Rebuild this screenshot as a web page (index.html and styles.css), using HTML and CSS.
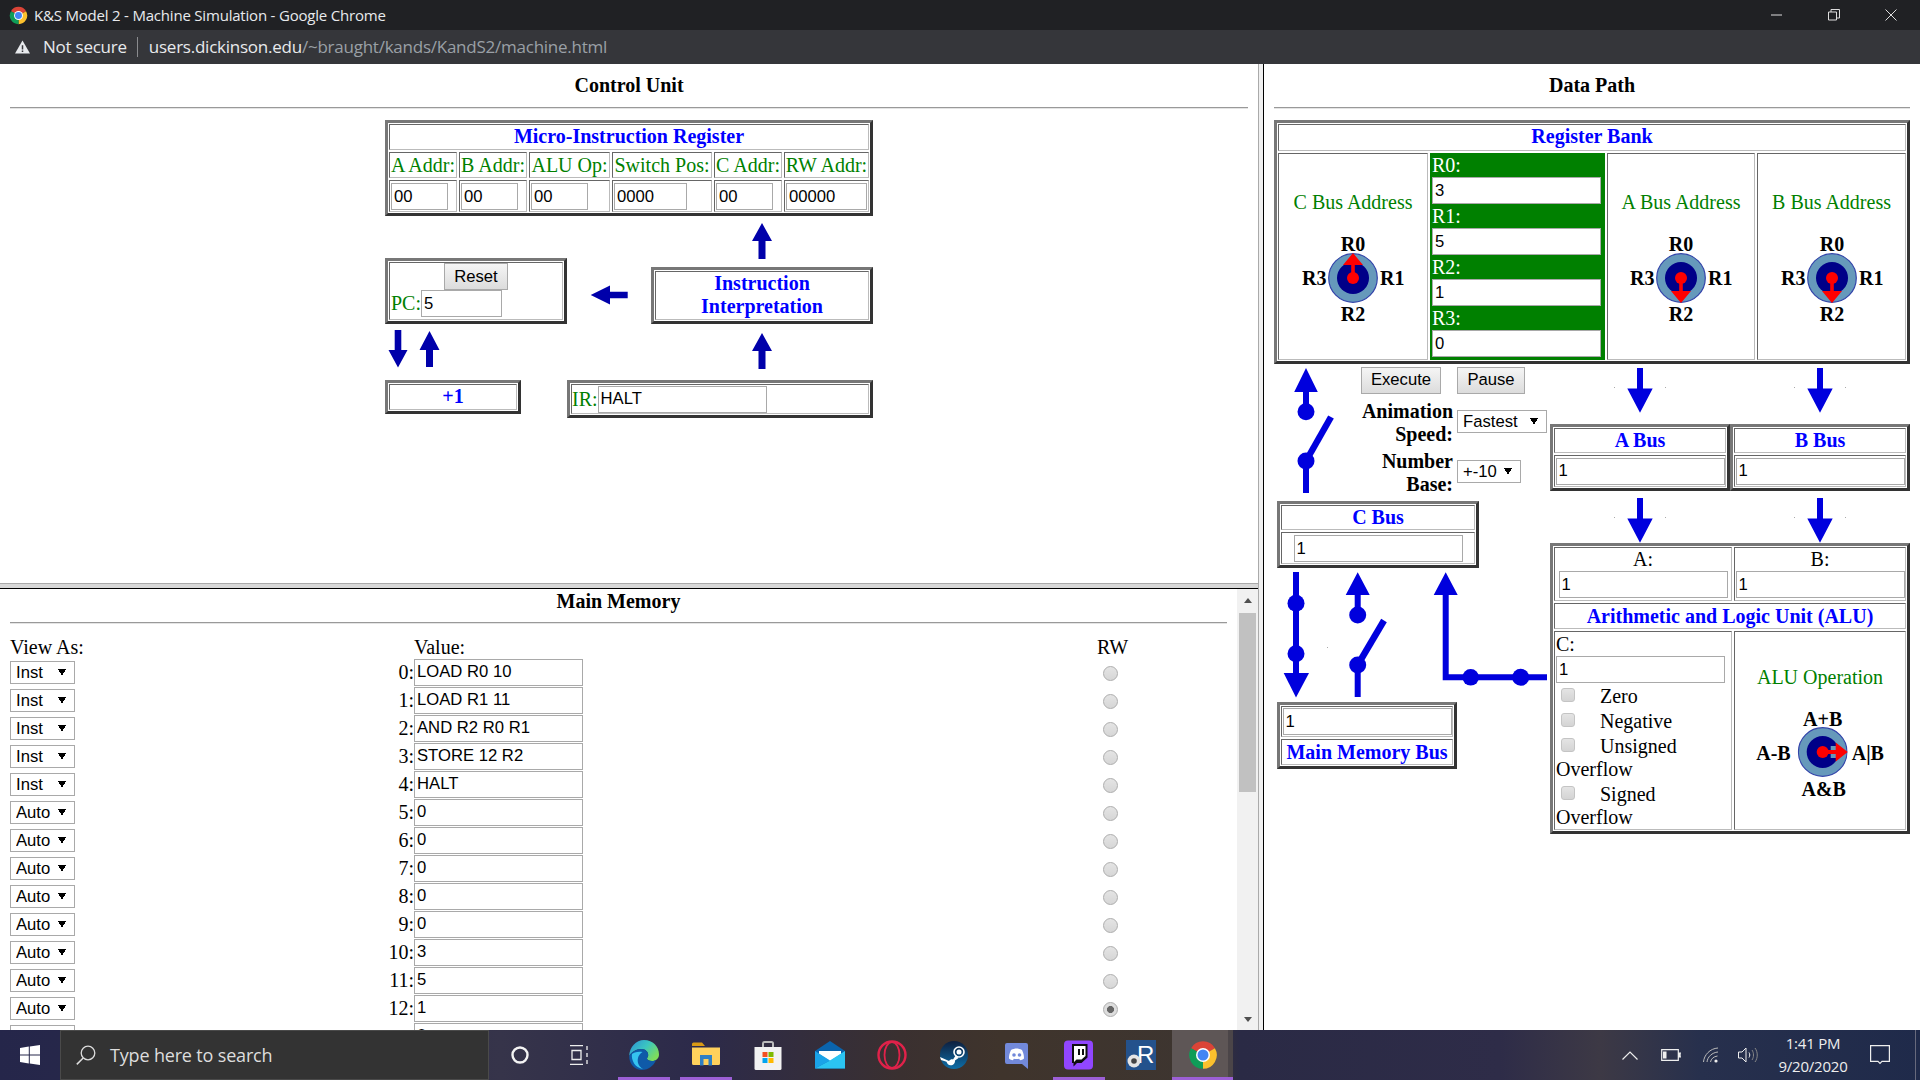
FILE: index.html
```html
<!DOCTYPE html>
<html lang="en">
<head>
<meta charset="utf-8">
<title>K&amp;S Model 2 - Machine Simulation</title>
<link rel="stylesheet" href="styles.css">
</head>
<body>
<svg class="defs" width="0" height="0" aria-hidden="true">
  <symbol id="chrome" viewBox="0 0 24 24">
    <path fill="#db4437" d="M12 12 21.53 6.5A11 11 0 0 0 2.47 6.5Z"/>
    <path fill="#fbc02d" d="M12 12 21.53 6.5A11 11 0 0 1 12 23Z"/>
    <path fill="#0f9d58" d="M12 12 12 23A11 11 0 0 1 2.47 6.5Z"/>
    <circle cx="12" cy="12" r="5.6" fill="#fff"/>
    <circle cx="12" cy="12" r="4.4" fill="#4285f4"/>
  </symbol>
  <symbol id="dialface" viewBox="0 0 50 50">
    <circle cx="25" cy="25" r="24.3" fill="#6699bb" stroke="#3344aa" stroke-width="1.2"/>
    <circle cx="25" cy="25" r="16" fill="#000088"/>
  </symbol>
</svg>

<header class="titlebar">
  <svg class="title-logo"><use href="#chrome"/></svg>
  <span class="title-text">K&amp;S Model 2 - Machine Simulation - Google Chrome</span>
  <div class="win-controls">
    <svg class="win-btn" viewBox="0 0 12 12"><path d="M0 6h11" stroke="#ddd" fill="none"/></svg>
    <svg class="win-btn" viewBox="0 0 12 12"><path d="M.5 3h8v8h-8zM3 3V.5h8.5V9H8.5" stroke="#ddd" fill="none"/></svg>
    <svg class="win-btn" viewBox="0 0 12 12"><path d="M.5.5l11 11M11.5.5l-11 11" stroke="#ddd" fill="none"/></svg>
  </div>
</header>
<div class="addrbar">
  <svg class="warn" viewBox="0 0 16 14"><path fill="#e8eaed" d="M8 0 16 14H0Z"/><path fill="#35363a" d="M7.2 5h1.6v4.6H7.2zM7.2 10.6h1.6v1.6H7.2z"/></svg>
  <span class="not-secure">Not secure</span>
  <span class="addr-sep"></span>
  <span class="url"><span class="url-host">users.dickinson.edu</span>/~braught/kands/KandS2/machine.html</span>
</div>

<main class="workspace">
  <div class="left-col">
    <section class="frame control">
      <h1 class="frame-title">Control Unit</h1>
      <hr class="rule">
      <svg class="wires" viewBox="0 64 1258 519" fill="#0000aa">
        <path d="M762 223l10 18h-6.5v18h-7v-18h-6.500z"/>
        <path d="M762 333l10 18h-6.500v18h-7v-18h-6.500z"/>
        <path d="M398 367.500l-9.500-17.500h6.200v-20h6.600v20h6.200z"/>
        <path d="M429.500 331l10 19h-6.500v17h-7v-17h-6.500z"/>
        <path d="M590.700 295l19.300-9.500v6.200h17.700v6.600h-17.700v6.200z"/>
      </svg>

      <div class="box mir">
        <div class="cell head span6">Micro-Instruction Register</div>
        <div class="cell lbl">A Addr:</div>
        <div class="cell lbl">B Addr:</div>
        <div class="cell lbl">ALU Op:</div>
        <div class="cell lbl">Switch Pos:</div>
        <div class="cell lbl">C Addr:</div>
        <div class="cell lbl">RW Addr:</div>
        <div class="cell mir-in"><input class="field w57" value="00"></div>
        <div class="cell mir-in"><input class="field w57" value="00"></div>
        <div class="cell mir-in"><input class="field w57" value="00"></div>
        <div class="cell mir-in"><input class="field w73" value="0000"></div>
        <div class="cell mir-in"><input class="field w57" value="00"></div>
        <div class="cell mir-in"><input class="field w81" value="00000"></div>
      </div>

      <div class="box pc">
        <div class="cell pc-cell">
          <button class="btn reset">Reset</button>
          <div class="pc-row"><span class="green">PC:</span><input class="field w81" value="5"></div>
        </div>
      </div>
      <div class="box interp"><div class="cell head">Instruction<br>Interpretation</div></div>
      <div class="box plus"><div class="cell head">+1</div></div>
      <div class="box ir"><div class="cell ir-cell"><span class="green">IR:</span><input class="field" value="HALT"></div></div>
    </section>
    <div class="hsplit"></div>
    <section class="memory">
      <div class="mem-body">
        <h2 class="frame-title mem-title">Main Memory</h2>
        <hr class="rule mem-rule">
        <div class="mem-row mem-head"><span class="nowrap">View As:</span><span></span><span>Value:</span><span class="rw-h">RW</span></div>
        <div class="mem-row"><select class="sel"><option>Inst</option></select><span class="addr">0:</span><input class="field" value="LOAD R0 10"><input class="radio" type="radio" name="rw"></div>
        <div class="mem-row"><select class="sel"><option>Inst</option></select><span class="addr">1:</span><input class="field" value="LOAD R1 11"><input class="radio" type="radio" name="rw"></div>
        <div class="mem-row"><select class="sel"><option>Inst</option></select><span class="addr">2:</span><input class="field" value="AND R2 R0 R1"><input class="radio" type="radio" name="rw"></div>
        <div class="mem-row"><select class="sel"><option>Inst</option></select><span class="addr">3:</span><input class="field" value="STORE 12 R2"><input class="radio" type="radio" name="rw"></div>
        <div class="mem-row"><select class="sel"><option>Inst</option></select><span class="addr">4:</span><input class="field" value="HALT"><input class="radio" type="radio" name="rw"></div>
        <div class="mem-row"><select class="sel"><option>Auto</option></select><span class="addr">5:</span><input class="field" value="0"><input class="radio" type="radio" name="rw"></div>
        <div class="mem-row"><select class="sel"><option>Auto</option></select><span class="addr">6:</span><input class="field" value="0"><input class="radio" type="radio" name="rw"></div>
        <div class="mem-row"><select class="sel"><option>Auto</option></select><span class="addr">7:</span><input class="field" value="0"><input class="radio" type="radio" name="rw"></div>
        <div class="mem-row"><select class="sel"><option>Auto</option></select><span class="addr">8:</span><input class="field" value="0"><input class="radio" type="radio" name="rw"></div>
        <div class="mem-row"><select class="sel"><option>Auto</option></select><span class="addr">9:</span><input class="field" value="0"><input class="radio" type="radio" name="rw"></div>
        <div class="mem-row"><select class="sel"><option>Auto</option></select><span class="addr">10:</span><input class="field" value="3"><input class="radio" type="radio" name="rw"></div>
        <div class="mem-row"><select class="sel"><option>Auto</option></select><span class="addr">11:</span><input class="field" value="5"><input class="radio" type="radio" name="rw"></div>
        <div class="mem-row"><select class="sel"><option>Auto</option></select><span class="addr">12:</span><input class="field" value="1"><input class="radio" type="radio" name="rw" checked></div>
        <div class="mem-row"><select class="sel"><option>Auto</option></select><span></span><input class="field" value="0"><input class="radio" type="radio" name="rw"></div>
      </div>
      <div class="scrollbar">
        <div class="sb-btn"><span class="tri-up"></span></div>
        <div class="sb-track"><div class="sb-thumb"></div></div>
        <div class="sb-btn"><span class="tri-down"></span></div>
      </div>
    </section>
  </div>
  <div class="vsplit"></div>

  <section class="frame datapath">
    <h1 class="frame-title">Data Path</h1>
    <hr class="rule">
    <svg class="wires" viewBox="1264 64 656 966" fill="#0000dd" stroke-linecap="butt">
      <!-- C bus feed from register bank -->
      <path d="M1306 368l11.800 24H1309v12h-6v-12h-8.800z"/>
      <circle cx="1306" cy="411.700" r="8.500"/>
      <path d="M1306 461 1331 417" stroke="#0000dd" stroke-width="6.500" fill="none"/>
      <circle cx="1306" cy="461" r="8.500"/>
      <rect x="1303" y="461" width="6" height="32"/>
      <!-- register bank to A and B bus -->
      <path d="M1637 368h6v20.500h9.700L1640 412.700l-12.700-24.200h9.700z"/>
      <path d="M1817 368h6v20.500h9.700L1820 412.700l-12.700-24.200h9.700z"/>
      <path d="M1637 498h6v20.500h9.700L1640 542.700l-12.700-24.200h9.700z"/>
      <path d="M1817 498h6v20.500h9.700L1820 542.700l-12.700-24.200h9.700z"/>
      <g fill="#aaa">
        <rect x="1614" y="387" width="1" height="1"/><rect x="1665" y="387" width="1" height="1"/>
        <rect x="1794" y="387" width="1" height="1"/><rect x="1845" y="387" width="1" height="1"/>
        <rect x="1614" y="517" width="1" height="1"/><rect x="1665" y="517" width="1" height="1"/>
        <rect x="1794" y="517" width="1" height="1"/><rect x="1845" y="517" width="1" height="1"/>
        <rect x="1327" y="647" width="1" height="1"/>
      </g>
      <!-- C bus to memory bus -->
      <rect x="1293" y="572" width="6" height="105"/>
      <circle cx="1296" cy="603.300" r="8.500"/>
      <circle cx="1296" cy="653.700" r="8.500"/>
      <path d="M1283.700 673h25.300L1296 697.500z"/>
      <!-- memory bus to C bus -->
      <path d="M1357.700 572.300l12 22.700h-9v15h-6v-15h-9z"/>
      <circle cx="1357.700" cy="615" r="8.500"/>
      <path d="M1357.700 665 1384 620.500" stroke="#0000dd" stroke-width="6.500" fill="none"/>
      <circle cx="1357.700" cy="665" r="8.500"/>
      <rect x="1354.700" y="665" width="6" height="32"/>
      <!-- ALU to C bus -->
      <path d="M1445.700 572.300l12 22.700h-9v79.300h98.300v6h-104.300V595h-9z"/>
      <circle cx="1470.700" cy="677.300" r="8.300"/>
      <circle cx="1520.700" cy="677.300" r="8.500"/>
    </svg>

    <div class="box bank">
      <div class="cell head span4">Register Bank</div>
      <div class="cell dial-cell">
        <span class="green">C Bus Address</span>
        <svg class="dial" viewBox="-70 -50 140 100">
          <use href="#dialface" x="-25" y="-25" width="50" height="50"/>
          <path class="needle" d="M-1.800 0V-13L-10 -13 0-25 10-13 1.800-13V0z"/><circle class="needle" r="6"/>
          <text class="dial-text" y="-27.500">R0</text><text class="dial-text" x="-38.700" y="6.500">R3</text><text class="dial-text" x="39.300" y="6.500">R1</text><text class="dial-text" y="42.500">R2</text>
        </svg>
      </div>
      <div class="cell regs">
        <label class="reg-lbl">R0:</label><input class="field" value="3">
        <label class="reg-lbl">R1:</label><input class="field" value="5">
        <label class="reg-lbl">R2:</label><input class="field" value="1">
        <label class="reg-lbl">R3:</label><input class="field" value="0">
      </div>
      <div class="cell dial-cell">
        <span class="green">A Bus Address</span>
        <svg class="dial" viewBox="-70 -50 140 100">
          <use href="#dialface" x="-25" y="-25" width="50" height="50"/>
          <path class="needle" d="M-1.800 0V13L-10 13 0 25 10 13 1.800 13V0z"/><circle class="needle" r="6"/>
          <text class="dial-text" y="-27.500">R0</text><text class="dial-text" x="-38.700" y="6.500">R3</text><text class="dial-text" x="39.300" y="6.500">R1</text><text class="dial-text" y="42.500">R2</text>
        </svg>
      </div>
      <div class="cell dial-cell">
        <span class="green">B Bus Address</span>
        <svg class="dial" viewBox="-70 -50 140 100">
          <use href="#dialface" x="-25" y="-25" width="50" height="50"/>
          <path class="needle" d="M-1.800 0V13L-10 13 0 25 10 13 1.800 13V0z"/><circle class="needle" r="6"/>
          <text class="dial-text" y="-27.500">R0</text><text class="dial-text" x="-38.700" y="6.500">R3</text><text class="dial-text" x="39.300" y="6.500">R1</text><text class="dial-text" y="42.500">R2</text>
        </svg>
      </div>
    </div>

    <div class="sim-buttons">
      <button class="btn exec">Execute</button>
      <button class="btn pause">Pause</button>
    </div>
    <div class="sim-opts">
      <div class="opt-lbl">Animation<br>Speed:</div>
      <select class="sel sel-fast"><option>Fastest</option></select>
      <div class="opt-lbl">Number<br>Base:</div>
      <select class="sel sel-base"><option>+-10</option></select>
    </div>

    <div class="box bus a-bus">
      <div class="cell head">A Bus</div>
      <div class="cell center"><input class="field" value="1"></div>
    </div>
    <div class="box bus b-bus">
      <div class="cell head">B Bus</div>
      <div class="cell center"><input class="field" value="1"></div>
    </div>
    <div class="box bus c-bus">
      <div class="cell head">C Bus</div>
      <div class="cell center"><input class="field" value="1"></div>
    </div>
    <div class="box bus mm-bus">
      <div class="cell center"><input class="field" value="1"></div>
      <div class="cell head">Main Memory Bus</div>
    </div>

    <div class="box alu">
      <div class="cell alu-in"><span>A:</span><input class="field" value="1"></div>
      <div class="cell alu-in"><span>B:</span><input class="field" value="1"></div>
      <div class="cell head span2">Arithmetic and Logic Unit (ALU)</div>
      <div class="cell alu-out">
        <div>C:</div>
        <input class="field" value="1">
        <div class="flag"><input class="check" type="checkbox">Zero</div>
        <div class="flag"><input class="check" type="checkbox">Negative</div>
        <div class="flag"><input class="check" type="checkbox">Unsigned Overflow</div>
        <div class="flag"><input class="check" type="checkbox">Signed Overflow</div>
      </div>
      <div class="cell dial-cell">
        <span class="green">ALU Operation</span>
        <svg class="dial" viewBox="-72.700 -50 140 100">
          <use href="#dialface" x="-25" y="-25" width="50" height="50"/>
          <rect x="8" y="-6" width="10" height="12" fill="#6699bb"/>
          <path class="needle" d="M0-2H13V-9.500L25 0 13 9.500V2H0z"/><circle class="needle" r="6"/>
          <text class="dial-text" y="-26.500">A+B</text><text class="dial-text end" x="-32" y="7.500">A-B</text><text class="dial-text start" x="29" y="7.500">A|B</text><text class="dial-text" x="1" y="43.500">A&amp;B</text>
        </svg>
      </div>
    </div>
  </section>
</main>

<footer class="taskbar">
  <div class="start">
    <svg class="ico20" viewBox="0 0 20 20"><path fill="#fff" d="M0 2.900 8.800 1.600V9.500H0zM9.800 1.400 20 0V9.500H9.800zM0 10.500H8.800V18.400L0 17.100zM9.800 10.500H20V20L9.800 18.600z"/></svg>
  </div>
  <div class="search">
    <svg class="ico20" viewBox="0 0 20 20"><circle cx="12" cy="8" r="6.800" fill="none" stroke="#ddd" stroke-width="1.300"/><path d="M7.200 13 .8 19.400" stroke="#ddd" stroke-width="1.500"/></svg>
    <span class="search-text">Type here to search</span>
  </div>
  <div class="tb tb-cortana"><svg class="ico20" viewBox="0 0 20 20"><circle cx="10" cy="10" r="7.500" fill="none" stroke="#f4f4f4" stroke-width="2.400"/></svg></div>
  <div class="tb tb-view"><svg class="ico20" viewBox="0 0 20 20"><path d="M1 .5h13M1 19.500h13M3 5.500h9v9H3zM18 1v4M18 8v4M18 15v4" fill="none" stroke="#eee" stroke-width="1.300"/></svg></div>
  <div class="tb open"><svg class="ico30" viewBox="0 0 30 30">
    <defs><linearGradient id="edgeg" x1="0" y1="0" x2="1" y2=".6"><stop offset="0" stop-color="#2b8fd8"/><stop offset=".55" stop-color="#3bc6c0"/><stop offset="1" stop-color="#7ddc5c"/></linearGradient></defs>
    <path fill="url(#edgeg)" d="M15 0C24 0 30 6.500 30 14.500c0 4-3 6.500-7 6.500-3 0-5-1-5-2.500 0-1 1.200-1.500 1.200-3.500 0-3-2.700-6-6.700-6C7 9 1.800 12.500 .2 16 .5 7 7 0 15 0z"/>
    <path fill="#0f5aa8" d="M.2 16c1.600-3.500 6.800-7 12.300-7 4 0 6.700 3 6.700 6 0 2-1.200 2.500-1.200 3.500 0 1.500 2 2.500 5 2.500 1.500 0 3-.4 4-1-2 5.500-7.500 10-14 10C6 30 0 24 .2 16z"/>
    <path fill="#35c3ef" d="M3 14c-1 6 3 14 11 15-4.500-2.500-6-7-5-11 .6-2.400 2-4.500 4.500-6-5-.8-9 .6-10.500 2z"/>
  </svg></div>
  <div class="tb open"><svg class="ico30" viewBox="0 0 30 30">
    <path fill="#d99a14" d="M1 4a1.500 1.500 0 0 1 1.500-1.500H11l3 3.500H1z"/>
    <path fill="#ffd15c" d="M1 7.500h28v16a1.500 1.500 0 0 1-1.500 1.500h-25A1.500 1.500 0 0 1 1 23.500z"/>
    <path fill="#2f7fc4" d="M9 15h12v10.500h-3.500V19h-5v6.500H9z"/>
  </svg></div>
  <div class="tb"><svg class="ico30" viewBox="0 0 30 30">
    <path fill="none" stroke="#bbb" stroke-width="2" d="M10 9V3.500a1.500 1.500 0 0 1 1.500-1.500h7A1.500 1.500 0 0 1 20 3.500V9"/>
    <path fill="#f2f2f2" d="M1.500 7h27v21.500a1.500 1.500 0 0 1-1.500 1.500H3a1.500 1.500 0 0 1-1.500-1.500z"/>
    <rect x="9.500" y="12" width="5" height="5" fill="#f25022"/><rect x="15.500" y="12" width="5" height="5" fill="#7fba00"/>
    <rect x="9.500" y="18" width="5" height="5" fill="#00a4ef"/><rect x="15.500" y="18" width="5" height="5" fill="#ffb900"/>
  </svg></div>
  <div class="tb"><svg class="ico30" viewBox="0 0 30 30">
    <path fill="#0a64ad" d="M0 11 15 1l15 10v17.500H0z"/>
    <path fill="#fff" d="M4 11h22v3L15 21 4 14z"/>
    <path fill="#1aa3e8" d="M0 11 15 20.500 0 28.500z"/>
    <path fill="#2bc4f2" d="M30 11 15 20.500l-15 8h30z"/>
  </svg></div>
  <div class="tb"><svg class="ico30" viewBox="0 0 30 30">
    <ellipse cx="15" cy="15" rx="13.500" ry="13.500" fill="none" stroke="#e0224a" stroke-width="2.400"/>
    <ellipse cx="15" cy="15" rx="7.500" ry="13" fill="none" stroke="#e0224a" stroke-width="1.800"/>
  </svg></div>
  <div class="tb"><svg class="ico30" viewBox="0 0 30 30">
    <defs><linearGradient id="steamg" x1="0" y1="0" x2="0" y2="1"><stop offset="0" stop-color="#0e1f3e"/><stop offset="1" stop-color="#0d6ea8"/></linearGradient></defs>
    <circle cx="15" cy="15" r="14" fill="url(#steamg)"/>
    <circle cx="20" cy="12" r="5" fill="none" stroke="#fff" stroke-width="1.600"/><circle cx="20" cy="12" r="2.500" fill="#fff"/>
    <path fill="#fff" d="M1 17l9 4c1-1.500 3-2 4-1.500l3-4.500 2.500 3-3.500 2.500c.2 3-2 5-4.500 4.800-2-.2-3.500-1.500-4-3.500L2 20z"/>
  </svg></div>
  <div class="tb"><svg class="ico30" viewBox="0 0 30 30">
    <path fill="#7289da" d="M5 3h19a2 2 0 0 1 2 2v24l-6-5H5a2 2 0 0 1-2-2V5a2 2 0 0 1 2-2z"/>
    <path fill="#fff" d="M9 10c4-2 7-2 11 0 1.500 3 2 5.500 2 8.500-1.300 1-2.500 1.500-4 1.700l-.8-1.400c-1.500.4-3.900.4-5.400 0l-.8 1.400c-1.500-.2-2.700-.7-4-1.700 0-3 .5-5.500 2-8.500z"/>
    <circle cx="12" cy="15" r="1.800" fill="#7289da"/><circle cx="17.500" cy="15" r="1.800" fill="#7289da"/>
  </svg></div>
  <div class="tb open"><svg class="ico30" viewBox="0 0 30 30">
    <rect width="29" height="29" y=".500" rx="4" fill="#9146ff"/>
    <path fill="#0e0e10" d="M8 4h15.500v13.500L17.500 23H13l-3.500 3.500V23H8z"/>
    <path fill="#fff" d="M10 6h11.500v10l-4 3.500h-5L10 22v-2.500zM14 9v6h2V9zM18 9v6h2V9z" fill-rule="evenodd"/>
  </svg></div>
  <div class="tb"><svg class="ico30" viewBox="0 0 30 30">
    <rect width="30" height="30" fill="#24528c"/>
    <text class="r-text" x="11" y="23">R</text>
    <circle cx="8" cy="21" r="6.500" fill="#e4e4e4"/><circle cx="8" cy="21" r="2.800" fill="#444"/>
  </svg></div>
  <div class="tb open active"><svg class="ico30 chrome-ico"><use href="#chrome"/></svg></div>
  <div class="tray">
    <svg class="tray-caret" viewBox="0 0 16 9"><path d="M.5 8.500 8 1l7.500 7.500" fill="none" stroke="#eee" stroke-width="1.200"/></svg>
    <svg class="tray-batt" viewBox="0 0 20 12"><path d="M.7.700h16.600v10.600H.7zM18.500 4H20v4h-1.500z" fill="none" stroke="#eee" stroke-width="1.200"/><rect x="2" y="2.500" width="3.500" height="7" fill="#eee"/></svg>
    <svg class="tray-wifi" viewBox="0 0 16 16"><path d="M.5 15C1 8 7 1.500 15 1M4 15c.5-5 5-9.500 11-10M7.500 15c.5-3 3-5.500 7-6" fill="none" stroke="#bbb"/><circle cx="13" cy="14" r="1.600" fill="#eee"/></svg>
    <svg class="tray-vol" viewBox="0 0 20 16"><path d="M.5 5h3.500L8 1v14l-4-4H.5z" fill="none" stroke="#eee"/><path d="M11 5.500c1 1.500 1 3.500 0 5" fill="none" stroke="#eee"/><path d="M14 3c2 3 2 7 0 10M17 1c3 4 3 10 0 14" fill="none" stroke="#888"/></svg>
    <div class="clock"><span>1:41 PM</span><span>9/20/2020</span></div>
    <svg class="tray-note" viewBox="0 0 20 20"><path d="M.6.600h18.800v15.800H12L10 18.500 8 16.400H.6z" fill="none" stroke="#eee" stroke-width="1.200"/></svg>
    <span class="show-desktop"></span>
  </div>
</footer>
</body>
</html>
```

FILE: styles.css
```css
* { box-sizing: border-box; }
html, body { margin: 0; height: 100%; }
body {
  width: 1920px; height: 1080px; overflow: hidden;
  display: flex; flex-direction: column;
  font: 20px/23px "Liberation Serif", "Times New Roman", serif;
  color: #000; background: #fff;
}
.defs { position: absolute; }
.nowrap { white-space: nowrap; }

/* Browser chrome */
.titlebar { height: 30px; background: #202124; display: flex; align-items: center; padding-left: 9px; flex: none; }
.title-logo { width: 19px; height: 19px; }
.title-text { margin-left: 6px; font: 15px/30px "Open Sans", sans-serif; color: #e8eaed; letter-spacing: -.2px; }
.win-controls { margin-left: auto; display: flex; gap: 45px; padding-right: 23px; }
.win-btn { width: 12px; height: 12px; }
.addrbar { height: 34px; background: #35363a; display: flex; align-items: center; padding-left: 15px; flex: none; font: 17px/34px "Open Sans", sans-serif; letter-spacing: -.24px; }
.warn { width: 15px; height: 14px; }
.not-secure { margin-left: 13px; color: #e8eaed; }
.addr-sep { width: 1px; height: 20px; background: #8a8b8e; margin: 0 11px 0 10px; }
.url { color: #9aa0a6; }
.url-host { color: #e8eaed; }

/* Page frames */
.workspace { flex: 1; display: flex; min-height: 0; }
.left-col { width: 1258px; display: flex; flex-direction: column; flex: none; }
.vsplit { width: 6px; flex: none; background: #f0f0f0; border-left: 1px solid #aaa; border-right: 1px solid #000; }
.hsplit { height: 6px; flex: none; background: #d8d8d8; border-top: 1px solid #aaa; border-bottom: 1px solid #000; }
.frame { position: relative; padding: 10px 10px 0; }
.control { height: 519px; flex: none; }
.datapath { flex: 1; }
.frame-title { margin: 0; font: bold 20px/23px "Liberation Serif", serif; text-align: center; }
.rule { margin: 10px 0 0; height: 2px; border: 0; border-top: 1px solid #999; border-bottom: 1px solid #e4e4e4; }
.wires { position: absolute; left: 0; top: 0; width: 100%; height: 100%; pointer-events: none; }

/* Boxes of the diagrams */
.box {
  position: absolute; display: grid; gap: 2px; padding: 1px; background: #fff;
  border: 3px solid; border-color: #777 #333 #333 #777;
}
.cell { border: 1px solid; border-color: #666 #bbb #bbb #666; min-width: 0; }
.head { color: #00f; font-weight: bold; text-align: center; display: flex; flex-direction: column; justify-content: center; }
.mir .head, .plus .head, .interp .head { padding-bottom: 1px; }
.bank .head { padding-bottom: 2px; }
.lbl { color: #008000; text-align: center; white-space: nowrap; line-height: 25px; }
.green { color: #008000; }
.center { display: flex; align-items: center; justify-content: center; }
.span6 { grid-column: span 6; }
.span4 { grid-column: span 4; }
.span2 { grid-column: span 2; }

/* Form controls */
.field {
  width: 169px; height: 27px; flex: none; margin: 0; padding: 0 2px;
  border: 1px solid #a9a9a9; background: #fff; color: #000;
  font: 16.67px "Liberation Sans", Arial, sans-serif; display: block;
}
.w57 { width: 57px; }
.w73 { width: 73px; }
.w81 { width: 81px; }
.btn {
  margin: 0; padding: 0 0 1px; height: 27px; display: block;
  font: 16.67px "Liberation Sans", Arial, sans-serif; color: #000;
  border: 1px solid #a9a9a9; background: linear-gradient(#f5f5f5, #dcdcdc);
}
.sel {
  appearance: none; -webkit-appearance: none; margin: 0; height: 23px; width: 65px; padding: 0 0 1px 5px;
  display: block; border: 1px solid #a9a9a9; border-radius: 0; color: #000;
  font: 16.67px "Liberation Sans", Arial, sans-serif;
  background-color: #fff;
  background-image: linear-gradient(to top right, transparent 50%, #000 50%), linear-gradient(to top left, transparent 50%, #000 50%);
  background-size: 4px 7px, 4px 7px;
  background-position: right 12px top 7px, right 8px top 7px;
  background-repeat: no-repeat;
}
.radio {
  appearance: none; -webkit-appearance: none; display: block;
  width: 15px; height: 15px; margin: 2px 0 0 520px; border-radius: 50%;
  border: 1px solid #adadad; background: linear-gradient(#e4e4e4, #d6d6d6);
}
.radio:checked { background: radial-gradient(circle, #666 0 3.200px, #ddd 3.800px); }
.check {
  appearance: none; -webkit-appearance: none; display: inline-block;
  width: 14px; height: 14px; margin: 0 25px 0 5px; vertical-align: 1px; border-radius: 3px;
  border: 1px solid #c4c4c4; background: linear-gradient(#e4e4e4, #d4d4d4);
}

/* Control unit nodes */
.mir { left: 385px; top: 56px; width: 488px; height: 96px; grid-template-columns: 68px 68px 81px 100px 68px 85px; grid-template-rows: 26px 26px 32px; }
.mir-in { display: flex; align-items: center; padding: 1px 0 0 1px; }
.pc { left: 385px; top: 194px; width: 182px; height: 66px; }
.pc-cell { display: flex; flex-direction: column; align-items: stretch; }
.reset { width: 64px; align-self: center; margin-top: 0; padding: 0; }
.pc-row { display: flex; align-items: center; height: 27px; padding-left: 1px; }
.interp { left: 651px; top: 203px; width: 222px; height: 57px; }
.plus { left: 385px; top: 316px; width: 136px; height: 34px; }
.ir { left: 567px; top: 316px; width: 306px; height: 38px; }
.ir-cell { display: flex; align-items: center; padding-left: 0; }

/* Memory */
.memory { flex: 1; display: flex; min-height: 0; overflow: hidden; }
.mem-body { flex: 1; padding: 1px 10px 0; overflow: hidden; min-width: 0; }
.mem-rule { margin-top: 9px; }
.mem-row { display: grid; grid-template-columns: 65px 339px 169px 1fr; align-items: center; height: 27px; margin-bottom: 1px; }
.mem-row .field { padding-bottom: 2px; }
.mem-head { height: 23px; margin: 12px 0 0; }
.rw-h { margin-left: 514px; }
.addr { text-align: right; }
.scrollbar { width: 21px; flex: none; background: #f1f1f1; display: flex; flex-direction: column; }
.sb-btn { height: 22px; display: flex; align-items: center; justify-content: center; flex: none; }
.tri-up { border: 4.500px solid transparent; border-top: 0; border-bottom: 5px solid #505050; }
.tri-down { border: 4.500px solid transparent; border-bottom: 0; border-top: 5px solid #505050; }
.sb-track { flex: 1; padding: 2px 2px 0; }
.sb-thumb { height: 179px; background: #c1c1c1; }

/* Data path nodes */
.bank { left: 10px; top: 56px; width: 636px; height: 244px; grid-template-columns: 150px 175px 148px 149px; grid-template-rows: 27px 207px; }
.dial-cell { display: flex; flex-direction: column; align-items: center; padding-top: 37px; }
.dial { width: 140px; height: 100px; margin-top: 14px; flex: none; }
.dial-text { font: bold 20px "Liberation Serif", serif; text-anchor: middle; fill: #000; }
.dial-text.end { text-anchor: end; }
.dial-text.start { text-anchor: start; }
.needle { fill: #f00; }
.regs { background: #008000; border: 0; padding: 1px 2px; color: #fff; }
.reg-lbl { display: block; height: 23px; }
.regs .field { margin-bottom: 1px; }

.sim-buttons { position: absolute; left: 97px; top: 303px; display: flex; gap: 16px; }
.exec { width: 80px; }
.pause { width: 68px; }
.sim-opts { position: absolute; left: 97px; top: 336px; width: 187px; display: grid; grid-template-columns: 92px 95px; align-items: center; row-gap: 4px; }
.opt-lbl { font-weight: bold; text-align: right; white-space: nowrap; }
.sel-fast { width: 90px; margin: 0 0 3px 4px; }
.sel-base { width: 64px; margin: 0 0 3px 4px; }

.bus { width: 180px; height: 67px; grid-template-rows: 25px 32px; }
.a-bus { left: 286px; top: 360px; }
.b-bus { left: 466px; top: 360px; }
.c-bus { left: 13px; top: 437px; width: 202px; }
.c-bus .center { padding-top: 1px; }
.mm-bus { left: 13px; top: 638px; grid-template-rows: 31px 26px; }

.alu { left: 286px; top: 479px; width: 360px; height: 291px; grid-template-columns: 178px 172px; grid-template-rows: 54px 26px 199px; }
.alu-in { display: flex; flex-direction: column; align-items: center; }
.alu-out { padding: 1px 0 0 1px; }
.alu-out > .field { width: 169px; }
.flag { margin-top: 2px; }
.alu .dial-cell { padding-top: 34px; }
.alu .dial { margin-top: 13px; }

/* Taskbar */
.taskbar {
  height: 50px; flex: none; display: flex; align-items: center;
  background: linear-gradient(90deg, #25264a 0, #2b2b4a 300px, #36344a 500px, #2c2a4a 700px, #3a3030 900px, #3f342c 1000px, #3d3530 1200px, #2a2a45 1240px, #2e2c48 1500px, #3d3945 1600px, #27304d 1700px, #1f2a4a 1920px);
}
.ico20 { width: 20px; height: 20px; display: block; }
.ico30 { width: 30px; height: 30px; display: block; }
.start { width: 60px; height: 50px; display: flex; align-items: center; justify-content: center; }
.search { width: 429px; height: 50px; background: #333; border: 1px solid #4a4a4a; display: flex; align-items: center; padding-left: 15px; }
.search-text { margin-left: 14px; color: #ddd; font: 18px "Open Sans", sans-serif; letter-spacing: -.17px; }
.tb { width: 52.170px; height: 50px; margin: 0 5px; flex: none; display: flex; align-items: center; justify-content: center; border-bottom: 3px solid transparent; }
.tb > svg { margin-top: 3px; }
.tb-cortana { width: 52px; }
.tb-view { width: 46px; margin-right: 10.600px; }
.open { border-bottom-color: #9c5fd6; }
.active { width: 61px; margin: 0; background: linear-gradient(90deg, #5e5656 56px, #4b4548 56px); }
.chrome-ico { width: 30px; }
.r-text { font: 24px "Liberation Sans", sans-serif; fill: #fff; }
.tray { flex: 1; height: 50px; display: flex; align-items: center; color: #eee; position: relative; padding-left: 389px; }
.tray-caret { width: 16px; height: 9px; margin-right: 23px; }
.tray-batt { width: 20px; height: 12px; margin-right: 22px; }
.tray-wifi { width: 16px; height: 16px; margin-right: 18.500px; }
.tray-vol { width: 20px; height: 16px; }
.clock { width: 100px; margin-left: 5.500px; display: flex; flex-direction: column; align-items: center; font: 15px/23px "Open Sans", sans-serif; letter-spacing: -.2px; }
.tray-note { width: 20px; height: 20px; margin-left: 7px; }
.show-desktop { width: 1px; height: 50px; background: #67697c; margin-left: 25px; }
```
